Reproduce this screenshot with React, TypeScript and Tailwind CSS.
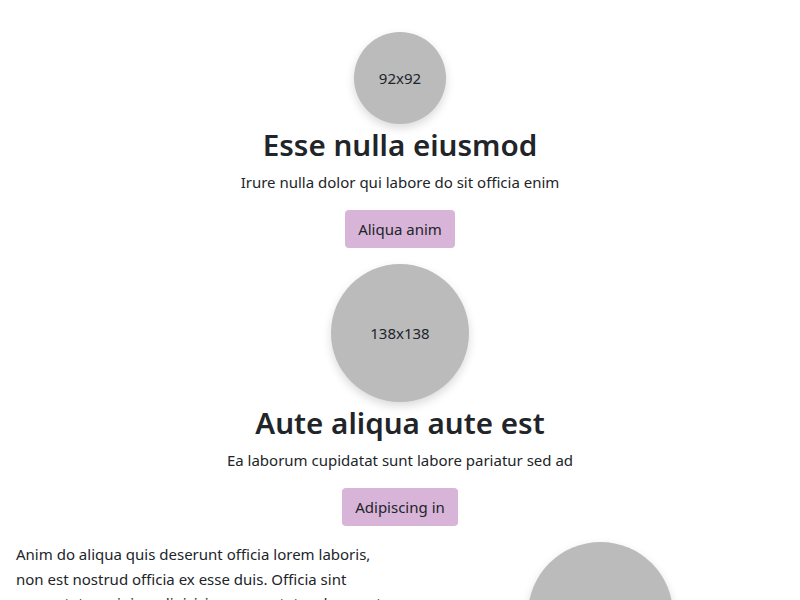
import React from "react";

function Circle({ size, label }: { size: number; label?: string }) {
  return (
    <div
      className="flex shrink-0 items-center justify-center rounded-full bg-[#bbbbbb] text-[15px] text-[#212529] shadow-[0_4px_10px_rgba(0,0,0,0.15)]"
      style={{ width: size, height: size }}
    >
      {label}
    </div>
  );
}

function Hero({ size, title, text, button }: { size: number; title: string; text: string; button: string }) {
  return (
    <section className="flex flex-col items-center">
      <Circle size={size} label={`${size}x${size}`} />
      <h2 className="mt-[4px] text-[29.6px] font-semibold leading-[34px] text-[#212529]">{title}</h2>
      <p className="mt-[8px] text-[15px] leading-[24px] text-[#212529]">{text}</p>
      <button className="mt-[16px] h-[38px] rounded-[4px] bg-[#d8b4d8] px-[13px] text-[15px] text-[#212529]">
        {button}
      </button>
    </section>
  );
}

export default function App() {
  return (
    <div className="min-h-[600px] bg-white pt-[32px] font-['Noto_Sans',sans-serif] text-[#212529]">
      <div className="flex flex-col gap-[16px]">
        <Hero size={92} title="Esse nulla eiusmod" text="Irure nulla dolor qui labore do sit officia enim" button="Aliqua anim" />
        <Hero size={138} title="Aute aliqua aute est" text="Ea laborum cupidatat sunt labore pariatur sed ad" button="Adipiscing in" />
        <div className="grid grid-cols-2">
          <p className="px-[16px] pt-[0px] text-[15px] leading-[24.5px]">
            Anim do aliqua quis deserunt officia lorem laboris, non est nostrud officia ex esse duis. Officia sint
            consectetur minim adipisicing consectetur deserunt velit labore commodo.
          </p>
          <div className="flex justify-center">
            <Circle size={145} label="145x145" />
          </div>
        </div>
      </div>
    </div>
  );
}
